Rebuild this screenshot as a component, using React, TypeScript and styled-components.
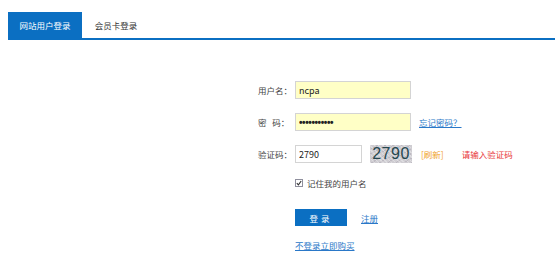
import styled, { createGlobalStyle } from "styled-components";

const GlobalStyle = createGlobalStyle`
  html, body {
    margin: 0;
    padding: 0;
    background: #fff;
  }
  body {
    font-family: "Noto Sans CJK SC", "Noto Sans", sans-serif;
    font-size: 9px;
    color: #333;
  }
`;

const BLUE = "#0b6fc2";

const Page = styled.div`
  width: 558px;
  height: 261px;
  overflow: hidden;
`;

const TabBar = styled.div`
  display: flex;
  margin: 12px 3px 0 8px;
  height: 26px;
  border-bottom: 2px solid ${BLUE};
`;

const Tab = styled.div<{ $active?: boolean }>`
  display: flex;
  align-items: center;
  justify-content: center;
  width: ${(p) => (p.$active ? "74px" : "68px")};
  height: 26px;
  background: ${(p) => (p.$active ? BLUE : "#fff")};
  color: ${(p) => (p.$active ? "#fff" : "#333")};
  font-size: 8.5px;
`;

const Form = styled.div`
  display: flex;
  flex-direction: column;
  margin: 41px 0 0 258px;
`;

const Row = styled.div`
  display: flex;
  align-items: center;
  height: 18px;
  margin-top: 14px;
  &:first-child {
    margin-top: 0;
  }
`;

const Label = styled.label`
  width: 37px;
  white-space: pre;
  color: #444;
  font-size: 8.5px;
`;

const Input = styled.input<{ $yellow?: boolean; $w?: number; $dots?: boolean }>`
  box-sizing: border-box;
  width: ${(p) => p.$w ?? 116}px;
  height: 18px;
  padding: 0 3px;
  border: 1px solid #d4d4d4;
  background: ${(p) => (p.$yellow ? "#ffffc6" : "#fff")};
  font-family: ${(p) =>
    p.$dots ? `"Liberation Sans", sans-serif` : `"Noto Sans CJK SC", "Noto Sans", sans-serif`};
  font-size: ${(p) => (p.$dots ? "10px" : "9px")};
  font-weight: ${(p) => (p.$dots ? 700 : 400)};
  letter-spacing: ${(p) => (p.$dots ? "-0.4px" : "0")};
  color: #222;
  outline: none;
`;

const Link = styled.a<{ $ml?: number }>`
  margin-left: ${(p) => p.$ml ?? 0}px;
  color: #2a78c8;
  text-decoration: underline;
  cursor: pointer;
  font-size: 8.5px;
`;

const Captcha = styled.div`
  display: flex;
  align-items: center;
  justify-content: center;
  width: 42px;
  height: 18px;
  margin-left: 8px;
  background-color: #cfcdd2;
  background-image: repeating-linear-gradient(45deg, rgba(255,255,255,0.3) 0 1px, transparent 1px 3px),
    repeating-linear-gradient(-30deg, rgba(120,110,130,0.2) 0 1px, transparent 1px 4px);
  color: #25474f;
  font-family: "Liberation Sans", sans-serif;
  font-size: 16px;
  letter-spacing: 0.5px;
`;

const Refresh = styled.span`
  margin-left: 9px;
  color: #f0a22a;
  font-size: 8.5px;
`;

const Hint = styled.span`
  margin-left: 18px;
  color: #e8383a;
  font-size: 8.5px;
`;

const CheckRow = styled.div`
  display: flex;
  align-items: center;
  height: 12px;
  margin: 14px 0 0 37px;
  color: #444;
  font-size: 8.5px;
`;

const CheckBox = styled.span`
  display: inline-flex;
  align-items: center;
  justify-content: center;
  box-sizing: border-box;
  width: 8px;
  height: 8px;
  margin-right: 4px;
  border: 1px solid #8f8f9d;
  background: #fff;
`;

const ActionRow = styled.div`
  display: flex;
  align-items: center;
  margin: 20px 0 0 37px;
`;

const Button = styled.button`
  width: 52px;
  height: 17px;
  border: none;
  background: ${BLUE};
  color: #fff;
  font-family: "Noto Sans CJK SC", "Noto Sans", sans-serif;
  font-size: 8.5px;
  letter-spacing: 3px;
  padding: 0;
`;

const BuyRow = styled.div`
  margin: 13px 0 0 37px;
`;

export default function App() {
  return (
    <Page>
      <GlobalStyle />
      <TabBar>
        <Tab $active>网站用户登录</Tab>
        <Tab>会员卡登录</Tab>
      </TabBar>
      <Form>
        <Row>
          <Label>用户名：</Label>
          <Input $yellow readOnly defaultValue="ncpa" />
        </Row>
        <Row>
          <Label>{"密   码："}</Label>
          <Input $yellow $dots readOnly defaultValue="•••••••••••" />
          <Link $ml={8}>忘记密码？</Link>
        </Row>
        <Row>
          <Label>验证码：</Label>
          <Input $w={67} readOnly defaultValue="2790" />
          <Captcha>2790</Captcha>
          <Refresh>[刷新]</Refresh>
          <Hint>请输入验证码</Hint>
        </Row>
        <CheckRow>
          <CheckBox>
            <svg width="6" height="6" viewBox="0 0 6 6">
              <path d="M0.8 3.2 L2.4 4.8 L5.2 1" fill="none" stroke="#333" strokeWidth="1.1" />
            </svg>
          </CheckBox>
          记住我的用户名
        </CheckRow>
        <ActionRow>
          <Button>登录</Button>
          <Link $ml={14}>注册</Link>
        </ActionRow>
        <BuyRow>
          <Link>不登录立即购买</Link>
        </BuyRow>
      </Form>
    </Page>
  );
}
